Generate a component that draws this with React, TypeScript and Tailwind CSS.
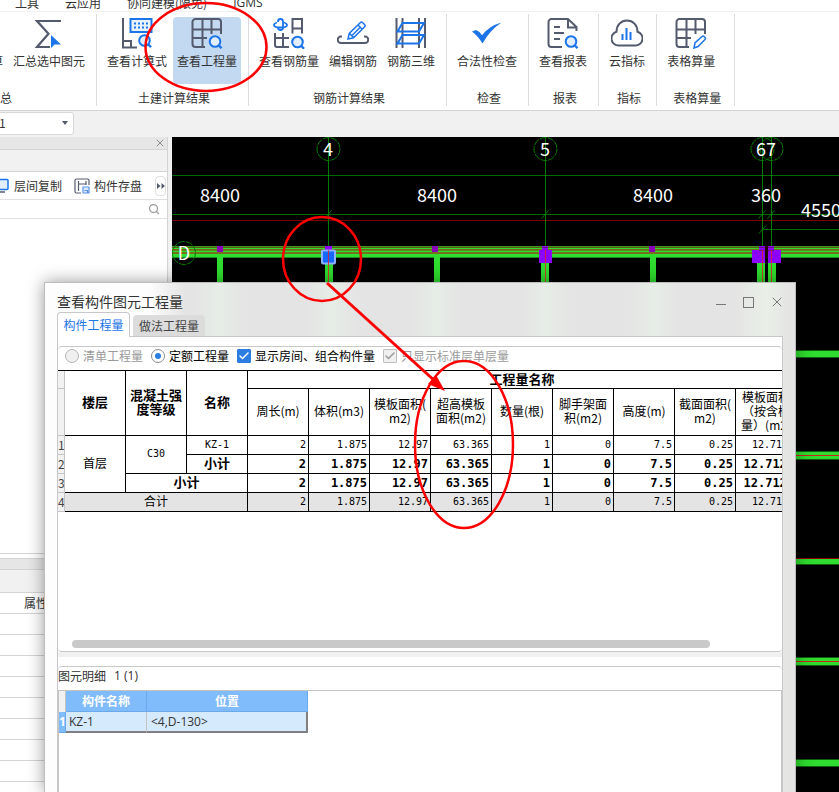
import { useState, type ReactNode } from "react";
import { Check, Search, X } from "lucide-react";

const DARK = "#555b6e";
const BLUE = "#1b74e8";

/* ---------- Iconos de la cinta ---------- */

function Icon({ children }: { children: ReactNode }) {
  return (
    <svg viewBox="0 0 32 32" fill="none" stroke={DARK} strokeWidth="2" className="w-8 h-8 shrink-0" aria-hidden="true">
      {children}
    </svg>
  );
}

function Lens({ x = 24, y = 24.5 }: { x?: number; y?: number }) {
  return (
    <g stroke={BLUE}>
      <circle cx={x} cy={y} r="5.3" fill="#e2eefd" />
      <path d={`M${x + 3.5} ${y + 3.5}l3 3.2`} strokeWidth="2.4" />
    </g>
  );
}

const gridLines = (
  <>
    <path d="M14 30H4.500a3 3 0 0 1-3-3V5a3 3 0 0 1 3-3H27a3 3 0 0 1 3 3V17" />
    <path d="M11.500 2V30M20.500 2V17M1.500 12.500H30M1.500 21H16" />
  </>
);

const icons = {
  sigma: (
    <Icon>
      <path d="M28 4H4l11.500 12.800L4 30h13" strokeWidth="2.200" />
      <path d="M18 18v13l3.500-3.500L28 27.500z" fill={BLUE} stroke="none" />
    </Icon>
  ),
  formula: (
    <Icon>
      <path d="M2 1v29.500h14M2 24h8v6" />
      <rect x="9.500" y="2" width="21" height="13" stroke={BLUE} fill="#e8f2fe" />
      <path d="M13 6.500h15M13 10.500h15" stroke={BLUE} strokeDasharray="2 2" />
      <Lens x={23.500} y={23.500} />
    </Icon>
  ),
  grid: (
    <Icon>
      {gridLines}
      <Lens />
    </Icon>
  ),
  rebarQty: (
    <Icon>
      <g stroke={BLUE} strokeWidth="1.800">
        <path d="M5 5V4.500a2.500 2.500 0 0 1 5 0V10.500a2.500 2.500 0 0 1-5 0" />
        <path d="M4 5.500Q1 6.500 1 8q0 2.500 6.500 2.500T14 8q0-1.500-3-2.500" />
      </g>
      <path d="M19.500 16.500V2H29v14.500M19.500 11.500H29" />
      <path d="M2 16V28q0 2 2 2h12M10 16v14M2 21h14" />
      <Lens x={24.500} y={25} />
    </Icon>
  ),
  rebarEdit: (
    <Icon>
      <path d="M5 19.500H4a3.200 3.200 0 0 0 0 6.500h24a3.200 3.200 0 0 0 0-6.500h-1" />
      <path d="M11 22l1.200-5.500L23.500 5.500q1-1 2 0l2.200 2.200q1 1 0 2L16.500 20.700zM12.500 16.500l4 4M21 8l4 4M15 18.500L23.500 10" stroke={BLUE} strokeWidth="1.500" />
    </Icon>
  ),
  rebar3d: (
    <Icon>
      <path d="M1.500 1v30M7.500 1v30M24 1v30M30 1v30" />
      <path d="M7.500 6H29l-5 8.500H2.500zM7.500 18H29l-5 8.500H2.500z" stroke={BLUE} />
    </Icon>
  ),
  check: (
    <Icon>
      <path d="M1 14.500l4-1.500q4 1.500 6 5.200Q18 9 30.500 5.500 19 13 11.500 26.500 7 19 1 14.500z" fill={BLUE} stroke="none" />
    </Icon>
  ),
  report: (
    <Icon>
      <path d="M15 30H4.500a3 3 0 0 1-3-3V5a3 3 0 0 1 3-3H21l8.500 8V14M21 2v8.500h8.500" />
      <path d="M7 10h6M7 16h10M7 22h6" />
      <Lens />
    </Icon>
  ),
  cloud: (
    <Icon>
      <path d="M8 28.500A7 7 0 0 1 5.500 14.800C5.500 8 10 3.500 16 3.500S26.500 8 26.500 14.800A7 7 0 0 1 24 28.500z" />
      <path d="M11.500 17v6M15.500 11v12M19.500 15v8" stroke={BLUE} />
    </Icon>
  ),
  gridEdit: (
    <Icon>
      {gridLines}
      <path d="M19 31l1-5L27 19.500q1-1 2 0l1 1q1 1 0 2L23 29.500z" stroke={BLUE} strokeWidth="1.500" fill="#fff" />
    </Icon>
  ),
};

interface Tool {
  label: string;
  icon: ReactNode;
  active?: boolean;
}

interface Group {
  title: string;
  tools: Tool[];
}

const groups: Group[] = [
  {
    title: "汇总",
    tools: [
      { label: "汇总计算", icon: icons.sigma },
      { label: "汇总选中图元", icon: icons.sigma },
    ],
  },
  {
    title: "土建计算结果",
    tools: [
      { label: "查看计算式", icon: icons.formula },
      { label: "查看工程量", icon: icons.grid, active: true },
    ],
  },
  {
    title: "钢筋计算结果",
    tools: [
      { label: "查看钢筋量", icon: icons.rebarQty },
      { label: "编辑钢筋", icon: icons.rebarEdit },
      { label: "钢筋三维", icon: icons.rebar3d },
    ],
  },
  { title: "检查", tools: [{ label: "合法性检查", icon: icons.check }] },
  { title: "报表", tools: [{ label: "查看报表", icon: icons.report }] },
  { title: "指标", tools: [{ label: "云指标", icon: icons.cloud }] },
  { title: "表格算量", tools: [{ label: "表格算量", icon: icons.gridEdit }] },
];

function Ribbon() {
  return (
    <div className="flex shrink-0 bg-white border-b border-[#d4d4d4] pt-[2px] pb-1 overflow-hidden">
      {groups.map((g, i) => (
        <section
          key={g.title}
          className={`shrink-0 flex flex-col border-r border-[#dcdcdc] pt-[3px] ${i === 0 ? "w-[193px] -ml-24" : ""}`}
        >
          <div className={`flex gap-[2px] pl-[6px] pr-[7px] ${i === 0 ? "justify-end" : ""}`}>
            {g.tools.map((t) => (
              <button
                key={t.label}
                className={`h-[67px] px-1 flex flex-col items-center gap-1 rounded-sm whitespace-nowrap leading-4 ${t.active ? "bg-[#c3d9f1]" : ""}`}
              >
                {t.icon}
                {t.label}
              </button>
            ))}
          </div>
          <h2 className={`mt-[6px] text-center leading-4 ${i === 0 ? "" : "pl-4 pr-[13px]"}`}>{g.title}</h2>
        </section>
      ))}
    </div>
  );
}

/* ---------- Panel izquierdo ---------- */

function SidePanel() {
  return (
    <aside className="w-[168px] shrink-0 flex flex-col bg-white border-r border-[#d4d4d4] overflow-hidden">
      <div className="h-[13px] shrink-0 flex items-center justify-end pr-[1px] bg-[#e6e6e6] border-b border-[#d4d4d4]">
        <button aria-label="关闭"><X className="size-3 text-[#8c8c8c]" /></button>
      </div>
      <div className="h-[22px] shrink-0 bg-[#f1f1f1] border-b border-[#d4d4d4]" />
      <div className="h-7 shrink-0 flex items-center border-b border-[#e0e0e0] -ml-[7px] pr-[1px] whitespace-nowrap">
        <button className="flex items-center gap-[5px]">
          <svg viewBox="0 0 16 16" className="size-4" fill="#e2eefd" stroke={BLUE} strokeWidth="1.500">
            <rect x="1" y="1.500" width="14" height="10" rx="1" />
            <path d="M6 14h6" stroke={DARK} />
          </svg>
          层间复制
        </button>
        <button className="flex items-center gap-1 ml-3">
          <svg viewBox="0 0 16 16" className="size-4" fill="none" stroke={DARK} strokeWidth="1.200">
            <path d="M7 15H2.500A1.500 1.500 0 0 1 1 13.500v-11A1.500 1.500 0 0 1 2.500 1h11A1.500 1.500 0 0 1 15 2.500V7M4.500 3v10M4.500 6h7.500M12 3v4" />
            <path d="M9 9h6v6H9zM10.500 12.500h3V15" stroke="#5b93e8" fill="#dbe9fd" />
          </svg>
          构件存盘
        </button>
        <button className="ml-auto w-[11px] h-5 flex items-center justify-center border border-[#e0e0e0] rounded-sm" aria-label="更多">
          <svg viewBox="0 0 8 6" className="w-2 h-[6px] shrink-0" fill={DARK}>
            <path d="M0 0l3.500 3L0 6zM4.500 0L8 3 4.500 6z" />
          </svg>
        </button>
      </div>
      <div className="h-[19px] shrink-0 flex items-center justify-end pr-[7px] border-b border-[#e0e0e0]">
        <button aria-label="搜索"><Search className="size-3 text-[#9a9a9a]" strokeWidth={2.5} /></button>
      </div>
      <div className="h-[335px] shrink-0 border-b border-[#d4d4d4]" />
      <div className="h-[5px] shrink-0 border-b border-[#d4d4d4]" />
      <div className="h-[11px] shrink-0 bg-[#e6e6e6] border-b border-[#d4d4d4]" />
      <div className="h-[23px] shrink-0 bg-[#f1f1f1] border-b border-[#d4d4d4]" />
      <table className="w-full border-separate border-spacing-0">
        <thead>
          <tr>
            <th className="h-[21px] p-0 pl-6 text-left font-normal leading-4 border-b border-[#d4d4d4]">属性名称</th>
          </tr>
        </thead>
        <tbody>
          {Array.from({ length: 9 }, (_, i) => (
            <tr key={i}>
              <td className="h-[21px] p-0 border-b border-[#d4d4d4]" />
            </tr>
          ))}
        </tbody>
      </table>
    </aside>
  );
}

/* ---------- Plano CAD ---------- */

const axes = [
  { x: 328.5, name: "4" },
  { x: 545.5, name: "5" },
  { x: 762.5, name: "6" },
  { x: 771.5, name: "7" },
];

const beams = [
  { y: 351, h: 6, red: false },
  { y: 452, h: 7, red: true },
  { y: 559, h: 5, red: false },
  { y: 658, h: 7, red: true },
  { y: 760, h: 6, red: false },
];

const studs = [217, 432, 649];

function Drawing() {
  return (
    <svg
      viewBox="172 137 667 655"
      preserveAspectRatio="xMinYMin slice"
      className="flex-1 min-w-0 h-full bg-black font-['Noto_Sans_CJK_SC',sans-serif]"
      role="img"
      aria-label="平面图"
    >
      {/* líneas de cota */}
      <path d="M172 175.500H2000M172 214.500H2000M762 229.500H2000" stroke="#006a00" />
      <path d="M172 220.500H2000" stroke="#780000" />

      {/* viga horizontal principal */}
      <g shapeRendering="crispEdges">
        <rect x="172" y="246" width="2000" height="12" fill="#2fdc2f" />
        <rect x="172" y="246" width="2000" height="1" fill="#3f9a20" />
        <rect x="172" y="247" width="2000" height="1" fill="#5a5a14" />
        <rect x="172" y="249" width="2000" height="1" fill="#75641a" />
        <rect x="172" y="250" width="2000" height="1" fill="#5f8a1c" />
        <rect x="172" y="252" width="2000" height="2" fill="#75701a" />
        <rect x="172" y="257" width="2000" height="1" fill="#1c8a1c" />
      </g>

      {/* vigas verticales */}
      {[217, 434, 650].map((x) => (
        <rect key={x} x={x} y="257" width="6" height="60" fill="#2fdc2f" />
      ))}
      {[325, 541, 757, 768].map((x) => (
        <rect key={x} x={x} y="257" width="8" height="60" fill="#2fdc2f" />
      ))}

      {beams.map((b) => (
        <g key={b.y} shapeRendering="crispEdges">
          <rect x="780" y={b.y - 1} width="2000" height={b.h + 2} fill="#0f5f10" />
          <rect x="780" y={b.y} width="2000" height={b.h} fill="#2fdc2f" />
          {b.red && <rect x="780" y={b.y + 3} width="2000" height="1" fill="#d02414" />}
        </g>
      ))}
      <rect x="780" y="558" width="2000" height="1" fill="#8a0000" />

      {/* ejes */}
      {axes.map((a) => (
        <g key={a.name} stroke="#007c00" fill="none">
          <path d={`M${a.x} 137V250M${a.x - 4} 218.500l7-8`} />
          <circle cx={a.x} cy="149" r="11.500" strokeDasharray="7 1" />
        </g>
      ))}
      <path d="M759 233.500l7-8" stroke="#007c00" />
      <circle cx="184" cy="253" r="11.500" stroke="#007c00" fill="none" strokeDasharray="7 1" />

      {/* columnas */}
      <g fill="#8b00ff">
        {studs.map((x) => (
          <rect key={x} x={x} y="246" width="6" height="6" fill="#8a00b8" />
        ))}
        <path d="M325 246h7v4h-7zM542 246h6v4h4v13h-13v-13h3zM759 246h6v17h-13v-13h7zM768 246h6v4h7v13h-13z" />
        <rect x="765" y="246" width="3" height="12" fill="#200404" />
      </g>
      <path d="M759 247.500h6M759 250.500h6M768 247.500h6M768 250.500h6M542 247.500h6" stroke="#6a1080" />
      <rect x="322" y="250.500" width="13" height="13" rx="1" fill="#1468ff" stroke="#8fb2fb" strokeWidth="2" />
      <path d="M328.500 250V283M545.500 250V283M762.500 250V283M771.500 250V283" stroke="#e02020" strokeOpacity="0.8" />

      {/* textos */}
      <g fill="#fff" fontSize="18" textAnchor="middle">
        <text x="328" y="156">4</text>
        <text x="545" y="156">5</text>
        <text x="766" y="156">67</text>
        <text x="184" y="260">D</text>
        <text x="220" y="202">8400</text>
        <text x="437" y="202">8400</text>
        <text x="653" y="202">8400</text>
        <text x="766" y="202">360</text>
        <text x="821" y="217">4550</text>
      </g>
    </svg>
  );
}

/* ---------- Diálogo ---------- */

const columns: string[][] = [
  ["周长(m)"],
  ["体积(m3)"],
  ["模板面积(", "m2)"],
  ["超高模板", "面积(m2)"],
  ["数量(根)"],
  ["脚手架面", "积(m2)"],
  ["高度(m)"],
  ["截面面积(", "m2)"],
  ["模板面积", "（按含模", "量）(m2)"],
];

const values = ["2", "1.875", "12.97", "63.365", "1", "0", "7.5", "0.25", "12.7125"];

const cell = "p-0 border-r border-b border-black";
const rowHead = "p-0 overflow-hidden text-center font-normal text-[#444] bg-[#f1f1f1] border-r border-b border-[#c4c4c4]";

function Values({ bold = false }: { bold?: boolean }) {
  return (
    <>
      {values.map((v, i) => (
        <td
          key={i}
          className={`${cell} pr-[2px] text-right font-['DejaVu_Sans_Mono',monospace] ${bold ? "font-bold text-xs leading-[14px]" : "text-[10px] leading-[14px]"}`}
        >
          {v}
        </td>
      ))}
    </>
  );
}

function QuantityTable() {
  return (
    <table className="table-fixed w-[739px] border-separate border-spacing-0 border-t border-black text-black leading-[14px]">
      <colgroup>
        <col className="w-[7px]" />
        {Array.from({ length: 12 }, (_, i) => (
          <col key={i} className="w-[61px]" />
        ))}
      </colgroup>
      <thead>
        <tr className="h-[18px] text-[13px]">
          <th className={rowHead} />
          <th rowSpan={2} className={`${cell} pb-[2px]`}>楼层</th>
          <th rowSpan={2} className={`${cell} pb-[2px]`}>混凝土强<br />度等级</th>
          <th rowSpan={2} className={`${cell} pb-[2px]`}>名称</th>
          <th colSpan={9} className={`${cell} pb-[2px]`}>工程量名称</th>
        </tr>
        <tr className="h-[47px]">
          <th className={rowHead} />
          {columns.map((lines, i) => (
            <th key={i} className={`${cell} pb-[2px] font-normal whitespace-nowrap`}>
              {lines.map((l) => (
                <span key={l} className="block">{l}</span>
              ))}
            </th>
          ))}
        </tr>
      </thead>
      <tbody className="text-center">
        <tr className="h-[19px]">
          <th className={rowHead}>1</th>
          <td rowSpan={3} className={`${cell} pb-[2px]`}>首层</td>
          <td rowSpan={2} className={`${cell} pb-[2px] font-['DejaVu_Sans_Mono',monospace] text-[10px]`}>C30</td>
          <td className={`${cell} font-['DejaVu_Sans_Mono',monospace] text-[10px]`}>KZ-1</td>
          <Values />
        </tr>
        <tr className="h-[19px]">
          <th className={rowHead}>2</th>
          <td className={`${cell} pb-[2px] font-bold text-[13px]`}>小计</td>
          <Values bold />
        </tr>
        <tr className="h-[19px]">
          <th className={rowHead}>3</th>
          <td colSpan={2} className={`${cell} pb-[2px] font-bold text-[13px]`}>小计</td>
          <Values bold />
        </tr>
        <tr className="h-[19px] bg-[#e4e4e4]">
          <th className={rowHead}>4</th>
          <td colSpan={3} className={`${cell} pb-[2px]`}>合计</td>
          <Values />
        </tr>
      </tbody>
    </table>
  );
}

interface OptionProps {
  type: "radio" | "checkbox";
  label: string;
  checked: boolean;
  disabled?: boolean;
  onChange?: () => void;
}

function Option({ type, label, checked, disabled, onChange }: OptionProps) {
  const shape = type === "radio" ? "rounded-full border-[#8c8c8c]" : "rounded-[1px]";
  const fill =
    type === "radio"
      ? disabled ? "bg-[#f0f0f0] border-[#b4b4b4]" : "bg-white"
      : disabled ? "bg-[#f0f0f0] border-[#bdbdbd]" : checked ? "bg-[#2b7de0] border-[#2b7de0]" : "bg-white border-[#8c8c8c]";

  return (
    <label className={`flex items-center gap-1 ${disabled ? "text-[#9a9a9a]" : "text-black"}`}>
      <span className="grid place-items-center">
        <input
          type={type}
          name={type === "radio" ? "mode" : undefined}
          checked={checked}
          disabled={disabled}
          onChange={onChange}
          className={`appearance-none col-start-1 row-start-1 size-[14px] border ${shape} ${fill}`}
        />
        {checked && type === "radio" && <span className="col-start-1 row-start-1 size-[6px] rounded-full bg-[#2b7de0]" />}
        {checked && type === "checkbox" && (
          <Check className={`col-start-1 row-start-1 size-3 pointer-events-none ${disabled ? "text-[#9a9a9a]" : "text-white"}`} strokeWidth={3} />
        )}
      </span>
      {label}
    </label>
  );
}

function QuantityDialog() {
  const [rooms, setRooms] = useState(true);

  return (
    <div
      role="dialog"
      aria-label="查看构件图元工程量"
      className="absolute left-11 right-[43px] top-[282px] bottom-0 flex flex-col px-3 border border-b-0 border-[#bcbcbc] shadow-[0_0_16px_rgba(0,0,0,0.4)] bg-[linear-gradient(90deg,#fdfdfd_0,#fdfdfd_105px,#e4e4e4_140px,#e4e4e4_150px,#e6ede6_174px,#e4e4e4_198px,#e4e4e4_262px,#e6ede6_286px,#e4e4e4_310px,#e4e4e4_368px,#e6ede6_392px,#e4e4e4_416px,#e4e4e4_477px,#e6ede6_501px,#e4e4e4_525px,#e4e4e4_585px,#e6ede6_609px,#e4e4e4_633px,#e4e4e4_690px,#e9f0e6_721px,#e4e4e4_745px)]"
    >
      <header className="h-[29px] shrink-0 flex items-end justify-between">
        <h1 className="text-sm leading-5 text-[#333] pb-[1px]">查看构件图元工程量</h1>
        <div className="flex gap-4 h-5 items-center text-[#777]">
          <button aria-label="最小化" className="w-[11px] h-3 flex items-center pt-1"><span className="w-[10px] h-px bg-[#777]" /></button>
          <button aria-label="最大化" className="size-[11px] border border-[#777]" />
          <button aria-label="关闭" className="w-[13px] h-4 flex justify-center"><X className="size-4 shrink-0" strokeWidth={1.5} /></button>
        </div>
      </header>

      <div role="tablist" className="flex items-end gap-[3px] h-6 shrink-0">
        <button role="tab" aria-selected="true" className="relative z-10 h-[25px] w-[73px] -mb-px bg-white border border-b-0 border-[#c8c8cc] rounded-t-sm text-[#1b74e8]">
          构件工程量
        </button>
        <button role="tab" aria-selected="false" className="h-[21px] w-[72px] bg-[#dcdcdc] rounded-t-sm text-[#444]">
          做法工程量
        </button>
      </div>

      <div className="flex-1 min-h-0 flex flex-col bg-white border border-b-0 border-[#c8c8cc] pt-[9px] overflow-hidden">
        <section className="h-[306px] shrink-0 flex flex-col border-y border-[#c8c8c8] rounded-sm">
          <div className="h-[17px] shrink-0 flex items-center gap-2 pl-[7px] mb-[6px] whitespace-nowrap">
            <Option type="radio" label="清单工程量" checked={false} disabled />
            <Option type="radio" label="定额工程量" checked onChange={() => {}} />
            <Option type="checkbox" label="显示房间、组合构件量" checked={rooms} onChange={() => setRooms(!rooms)} />
            <Option type="checkbox" label="只显示标准层单层量" checked disabled />
          </div>
          <div className="flex-1 min-h-0 overflow-hidden">
            <QuantityTable />
          </div>
          <div className="h-2 mb-[3px] ml-[14px] mr-[72px] shrink-0 rounded-full bg-[#c9c9c9]" />
        </section>

        <div className="h-[5px] shrink-0 bg-[#f1f1f1]" />

        <section className="mt-[9px] flex-1 flex flex-col border-t border-[#c8c8c8] rounded-sm">
          <h2 className="h-[23px] leading-[18px] shrink-0 flex gap-2">
            图元明细 <span className="font-['Open_Sans',sans-serif]">1 (1)</span>
          </h2>
          <div className="flex-1 border-t border-x border-[#c4c4c4]">
            <table className="table-fixed w-[249px] border-separate border-spacing-0 leading-4">
              <colgroup>
                <col className="w-[7px]" />
                <col className="w-[81px]" />
                <col className="w-[161px]" />
              </colgroup>
              <thead>
                <tr className="h-[21px] text-white">
                  <th className="p-0 bg-[#f1f1f1] border-r border-[#c4c4c4]" />
                  <th className="p-0 bg-[#80bbfc] border-r border-b border-[#6aa9ec]">构件名称</th>
                  <th className="p-0 bg-[#80bbfc] border-r border-b border-[#6aa9ec]">位置</th>
                </tr>
              </thead>
              <tbody className="font-['Open_Sans',sans-serif]">
                <tr className="h-[21px]">
                  <th className="p-0 overflow-hidden bg-[#80bbfc] text-white border-r border-b border-[#6aa9ec]">1</th>
                  <td className="p-0 pl-[3px] bg-[#d6eafe] border-r border-r-[#c4c4c4] border-b-2 border-b-[#808080]">KZ-1</td>
                  <td className="p-0 pl-1 bg-[#d6eafe] border-r-2 border-b-2 border-[#808080]">&lt;4,D-130&gt;</td>
                </tr>
              </tbody>
            </table>
          </div>
        </section>
      </div>
    </div>
  );
}

/* Marcas rojas por encima de todo */
function Annotations() {
  return (
    <svg className="absolute inset-0 w-full h-full pointer-events-none" fill="none" stroke="#fe0000" strokeWidth="2.500" aria-hidden="true">
      <ellipse cx="206" cy="47" rx="60.500" ry="44" />
      <ellipse cx="322" cy="259" rx="39" ry="42" />
      <ellipse cx="464" cy="444.500" rx="49" ry="83.500" />
      <path d="M327 283L436 382" strokeWidth="3" />
      <path d="M445 391l-17-7 8-9z" fill="#fe0000" stroke="none" />
    </svg>
  );
}

export default function App() {
  return (
    <div className="relative h-screen flex flex-col overflow-hidden bg-[#f1f1f1] text-xs text-[#333] font-['Noto_Sans_CJK_SC',sans-serif]">
      <nav className="h-3 shrink-0 flex items-end gap-[26px] pl-[15px] bg-white border-b border-[#f0f0f0] overflow-hidden whitespace-nowrap leading-4">
        <a href="#tools">工具</a>
        <a href="#cloud">云应用</a>
        <a href="#model">协同建模(限免)</a>
        <a href="#igms" className="font-['Open_Sans',sans-serif]">IGMS</a>
      </nav>
      <Ribbon />
      <div className="h-[26px] shrink-0 flex items-center pb-[2px]">
        <div className="grid items-center w-[76px] -ml-[2px]">
          <select aria-label="楼层" className="appearance-none col-start-1 row-start-1 h-[23px] bg-white border border-[#d8d8d8] rounded-[3px] outline-none">
            <option>1</option>
          </select>
          <svg viewBox="0 0 6 4" className="col-start-1 row-start-1 justify-self-end mr-[6px] w-[6px] h-1 pointer-events-none" fill={DARK}>
            <path d="M0 0h6L3 4z" />
          </svg>
        </div>
      </div>
      <main className="flex-1 min-h-0 flex gap-1">
        <SidePanel />
        <Drawing />
      </main>
      <QuantityDialog />
      <Annotations />
    </div>
  );
}
